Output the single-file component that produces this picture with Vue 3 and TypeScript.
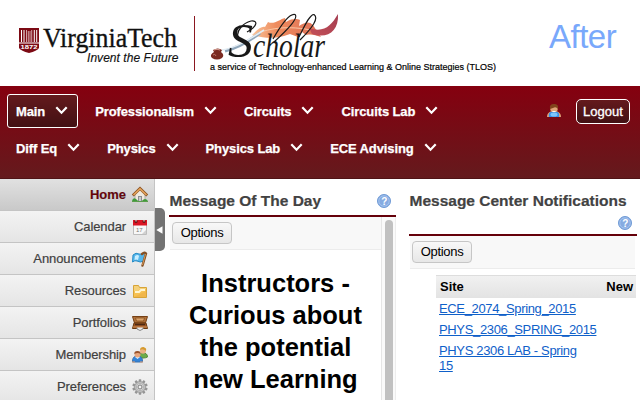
<script setup lang="ts">
interface NavItem { label: string; active?: boolean }
interface Tool { label: string; icon: string }

const navRows: NavItem[][] = [
  [{ label: 'Main', active: true }, { label: 'Professionalism' }, { label: 'Circuits' }, { label: 'Circuits Lab' }],
  [{ label: 'Diff Eq' }, { label: 'Physics' }, { label: 'Physics Lab' }, { label: 'ECE Advising' }],
]

const tools: Tool[] = [
  { label: 'Home', icon: 'home' },
  { label: 'Calendar', icon: 'calendar' },
  { label: 'Announcements', icon: 'flag' },
  { label: 'Resources', icon: 'folder' },
  { label: 'Portfolios', icon: 'case' },
  { label: 'Membership', icon: 'people' },
  { label: 'Preferences', icon: 'gear' },
]

const sites: string[] = ['ECE_2074_Spring_2015', 'PHYS_2306_SPRING_2015', 'PHYS 2306 LAB - Spring 15']
const teeth: number[] = [0, 36, 72, 108, 144, 180, 216, 252, 288, 324]
</script>

<template>
  <div class="page">
    <header class="banner">
      <svg class="vt" width="162" height="56" viewBox="0 0 162 56">
        <path d="M0 10H20V30Q18 33 10 35Q2 33 0 30Z" fill="#7c0a14" />
        <path d="M2.500 12V24M5 12V24M15.300 12V24M17.700 12V24" stroke="#fff" stroke-width="1" />
        <path d="M7.500 12V24M12.700 12V24M9.300 13V24M11 13V24" stroke="#e6c8cb" stroke-width=".8" />
        <path d="M0 25H20" stroke="#fff" stroke-width="1" />
        <text x="1.500" y="30.800" class="year" textLength="17" lengthAdjust="spacingAndGlyphs">1872</text>
        <text x="24" y="28.500" class="vt-name" textLength="134" lengthAdjust="spacingAndGlyphs">VirginiaTech</text>
        <text x="68" y="44" class="vt-tag" textLength="91.500">Invent the Future</text>
      </svg>
      <div class="rule"></div>
      <div class="scholar">
        <svg width="140" height="48" viewBox="0 0 140 48">
          <defs>
            <linearGradient id="plume" x1="0" x2="1">
              <stop offset="0" stop-color="#f8c49a" />
              <stop offset=".35" stop-color="#ee8b5d" />
              <stop offset="1" stop-color="#dd7058" />
            </linearGradient>
            <linearGradient id="tail" x1="0" y1="1" x2="1" y2="0">
              <stop offset="0" stop-color="#c45058" />
              <stop offset="1" stop-color="#a33c50" />
            </linearGradient>
          </defs>
          <path d="M47 22C53 16 57 13 60 14L63 9C69 12 75 6 80 5L81 9C88 5 92 6 95 7L94 13C100 9 104 8 108 12L113 20L116 24C110 22 107 21 101 22L97 19L93 24L85 21L79 23C69 26 58 25 47 22Z" fill="url(#plume)" />
          <path d="M48 22C66 14 88 12 114 19" stroke="#f9c7a5" stroke-width="1" fill="none" />
          <path d="M104 15C119 20 126 13 133 1C134 19 122 26 107 21Z" fill="url(#tail)" />
          <path d="M20 38C32 35 43 29 55 20" stroke="#8fa6ba" stroke-width="3" fill="none" />
          <path d="M17 37C30 35 42 28 59 17" stroke="#e3edf4" stroke-width="1.500" fill="none" />
          <path d="M8 37Q13 34 17 37L16 39Q20 42 17 45Q12 48 7 45Q4 42 9 39Z" fill="#7b2b22" />
          <path d="M9 37Q12 35.500 15 37" stroke="#d7a196" fill="none" />
          <path d="M8 42Q10 40 11 43" stroke="#bd7469" fill="none" />
          <text x="23" y="43.500" class="script cap" textLength="25" lengthAdjust="spacingAndGlyphs">S</text>
          <text x="48" y="43.500" class="script" textLength="72" lengthAdjust="spacingAndGlyphs">cholar</text>
          <path d="M42 19C53 13 53 7 46 8C38 10 31 18 33 24M69 29C82 17 94 5 90 1.500C85 0 76 12 68 26M95 27C108 14 114 5 109 1.500C105 1 100 12 94 24" stroke="#181818" stroke-width="1.200" fill="none" />
        </svg>
        <svg class="service" width="292" height="12" viewBox="0 0 292 12">
          <text x="0" y="8.800" textLength="286" lengthAdjust="spacingAndGlyphs">a service of Technology-enhanced Learning &amp; Online Strategies (TLOS)</text>
        </svg>
      </div>
      <div class="after">After</div>
    </header>

    <nav class="nav">
      <div class="rows">
        <div v-for="(row, r) in navRows" :key="r" class="nav-row">
          <a v-for="item in row" :key="item.label" class="site" :class="{ active: item.active }">
            <span>{{ item.label }}</span>
            <svg width="13" height="9" viewBox="0 0 13 9"><path d="M1.300 1.300L6.500 6.700L11.700 1.300" fill="none" stroke="#fff" stroke-width="2.200" /></svg>
          </a>
        </div>
      </div>
      <div class="account">
        <svg width="14" height="14" viewBox="0 0 14 14">
          <path d="M0 13C0 8 4 7 7 7S14 8 14 13Z" fill="#e1a477" />
          <path d="M2 13C1 8 4 7 7 8C10 7 13 8 12 13Z" fill="#3a91e9" />
          <ellipse cx="7" cy="10.500" rx="3.500" ry="2" fill="#7bc5fd" />
          <circle cx="7" cy="4.500" r="3.800" fill="#dfa478" />
          <path d="M3 5Q2 0 7 0Q12 0 11 5Q9 2 6 4Z" fill="#80441b" />
          <path d="M4.500 7Q7 9 9.500 7Z" fill="#fff" />
        </svg>
        <button class="logout">Logout</button>
      </div>
    </nav>

    <div class="body">
      <aside class="side">
        <a v-for="tool in tools" :key="tool.label" class="tool" :class="{ current: tool.icon === 'home' }">
          <span>{{ tool.label }}</span>
          <svg width="16" height="16" viewBox="0 0 16 16">
            <g v-if="tool.icon === 'home'">
              <path d="M3 7L8 2L13 7V14H3Z" fill="#eee9df" stroke="#98958d" stroke-width=".7" />
              <path d="M0.800 8.500L8 1.500L15.200 8.500" stroke="#8e5522" stroke-width="2.800" fill="none" />
              <path d="M1.500 8L8 1.700L14.500 8" stroke="#e8a75e" stroke-width="1.400" fill="none" />
              <path d="M6 14V9H10V14" fill="#8b8d90" /><path d="M7 14V10H9V14" fill="#c9cbcd" />
              <path d="M0 14Q1 10 4 12L6 14ZM10 14Q13 10 16 14Z" fill="#3f9b3b" /><path d="M0 14.500H16" stroke="#5b9d4d" />
            </g>
            <g v-else-if="tool.icon === 'calendar'">
              <path d="M1.500 2.500H14.500V15.500H1.500Z" fill="#f7f7f7" stroke="#bdbdbd" />
              <path d="M1 1H15V6.500H1Z" fill="#da1524" />
              <circle cx="4" cy="2.500" r="1.600" fill="#6e1616" /><circle cx="12" cy="2.500" r="1.600" fill="#6e1616" />
              <path d="M4 0V2.500M12 0V2.500" stroke="#eee" />
              <text x="4" y="13" class="date">17</text>
              <path d="M10 15L14 11V15Z" fill="#d1d1d1" />
            </g>
            <g v-else-if="tool.icon === 'flag'">
              <path d="M1 4Q4 1 7 3Q10 4 14 2L12 10Q8 12 5 10Q3 9 .5 11Z" fill="#55b6eb" stroke="#278bc5" />
              <path d="M3 5Q6 3 7 5L6 9Q4 8 2.500 9Z" fill="#c9eeff" />
              <path d="M10 3Q13 .5 14 2.500L10.500 14.500" fill="none" stroke="#855126" stroke-width="2.400" stroke-linecap="round" /><path d="M13.500 3L10.500 14" stroke="#d99a58" />
            </g>
            <g v-else-if="tool.icon === 'folder'">
              <path d="M1.500 14.500V2.500H6.500L7.500 4.500H14.500V14.500Z" fill="#f5d17a" stroke="#d7a438" />
              <path d="M2 14V8H6L8 6H14V14Z" fill="#f7c253" /><path d="M3 9H7L9 7H13" stroke="#fff6d2" stroke-width="2" fill="none" />
              <path d="M2 14L14 8V14Z" fill="#e9a941" opacity=".45" />
            </g>
            <g v-else-if="tool.icon === 'case'">
              <path d="M.5 1.500H15.500L13.500 8H2.500Z" fill="#b1723b" stroke="#754016" />
              <path d="M3.500 3H12.500L11.500 6H4.500Z" fill="#dba36b" stroke="#804719" stroke-width=".7" />
              <path d="M2 8H14L15.500 13.500H.5Z" fill="#9e5726" stroke="#69380f" />
              <path d="M3 9.500H13" stroke="#4c2a14" stroke-width="1.500" /><path d="M1 12H15" stroke="#d09257" />
              <path d="M5 12.500V14Q8 17 11 14V12.500" fill="#eee" stroke="#878787" />
            </g>
            <g v-else-if="tool.icon === 'people'">
              <path d="M7 11Q7 6 11 6Q15.500 6 15.500 10Q14 11 11 11Z" fill="#6cab49" stroke="#568d3b" />
              <circle cx="11" cy="3.700" r="3" fill="#eab184" /><path d="M8 3Q8 0 11.500 0Q15 1 14 4Q11 1 8 3Z" fill="#d69b2e" />
              <path d="M.5 15Q0 9 5.500 9Q11 9 10.500 15Z" fill="#3384d8" stroke="#3a71ae" />
              <path d="M3 10L5.500 12L8 10Z" fill="#e3f3ff" />
              <circle cx="5.500" cy="7.500" r="3" fill="#e8a77e" /><path d="M2.300 7Q2 4 5.500 4Q9 4 8.500 7Q6 5 2.300 7Z" fill="#99522b" />
              <path d="M0 15H3M8 15H11" stroke="#e5a377" />
            </g>
            <g v-else>
              <rect v-for="a in teeth" :key="a" x="6.700" y=".3" width="2.600" height="4" rx=".6" fill="#959595" :transform="`rotate(${a} 8 8)`" />
              <circle cx="8" cy="8" r="5.400" fill="#c6c6c6" stroke="#959595" stroke-width=".8" />
              <circle cx="8" cy="8" r="3.600" fill="#dedede" stroke="#a5a5a5" stroke-width=".7" />
              <circle cx="8" cy="8" r="2" fill="#f1f1f1" stroke="#7c7c7c" />
            </g>
          </svg>
        </a>
        <div class="handle"><svg width="7" height="8" viewBox="0 0 7 8"><path d="M6.500 .3V7.700L.3 4Z" fill="#fff" /></svg></div>
      </aside>

      <section class="panel motd">
        <div class="head"><h2>Message Of The Day</h2>
          <svg class="help" width="14" height="14" viewBox="0 0 14 14"><circle cx="7" cy="7" r="6.500" fill="#86abe1" stroke="#709bd6" /><circle cx="7" cy="7" r="5.200" fill="none" stroke="#abc8f1" stroke-width=".8" /><text x="4.200" y="10.600">?</text></svg>
        </div>
        <div class="frame">
          <div class="content">
            <div class="bar"><button class="options">Options</button></div>
            <p class="message">Instructors -<br />Curious about<br />the potential<br />new Learning</p>
          </div>
          <div class="track"><div class="thumb"></div></div>
        </div>
      </section>

      <section class="panel notes">
        <div class="head tall"><h2>Message Center Notifications</h2>
          <svg class="help" width="14" height="14" viewBox="0 0 14 14"><circle cx="7" cy="7" r="6.500" fill="#86abe1" stroke="#709bd6" /><circle cx="7" cy="7" r="5.200" fill="none" stroke="#abc8f1" stroke-width=".8" /><text x="4.200" y="10.600">?</text></svg>
        </div>
        <div class="bar"><button class="options">Options</button></div>
        <div class="table">
          <div class="thead"><span>Site</span><span>New</span></div>
          <div v-for="site in sites" :key="site" class="row"><a>{{ site }}</a></div>
        </div>
      </section>
    </div>
  </div>
</template>

<style>
body { margin: 0; overflow: hidden; }
</style>

<style scoped>
* { box-sizing: border-box; }
.page { width: 640px; height: 400px; overflow: hidden; background: #fff; font-family: "Liberation Sans", Arial, sans-serif; font-size: 13px; color: #000; }
svg { display: block; flex: none; overflow: visible; }
button { font-family: inherit; margin: 0; }
.banner { height: 86px; display: flex; padding-left: 19px; }
.vt { margin-top: 18px; }
.year { font: bold 6px "Liberation Sans", sans-serif; fill: #fff; }
.vt-name { font: 27px "Liberation Serif", serif; fill: #111; stroke: #111; stroke-width: .35px; }
.vt-tag { font: italic 12px "Liberation Sans", sans-serif; fill: #111; stroke: #111; stroke-width: .15px; }
.rule { width: 1px; height: 55px; margin: 16px 0 0 13px; background: #8b1720; }
.scholar { padding: 13px 0 0 11px; margin-left: 4px; width: 340px; }
.scholar svg { margin-left: -5px; }
.script { font: italic 33px "Liberation Serif", serif; fill: #181818; }
.cap { font-size: 48px; }
.scholar .service { margin-left: 0; }
.service text { font: 9.700px "Liberation Sans", sans-serif; fill: #000; stroke: #000; stroke-width: .2px; }
.after { margin: 18px 0 0 10px; font-size: 33px; line-height: 38px; letter-spacing: -.5px; color: #79a8fb; }

.nav { height: 93px; display: flex; justify-content: space-between; padding: 8px 10px 0 7px; background: linear-gradient(#85000f, #641a1d); border-bottom: 1px solid #501316; }
.rows { display: flex; flex-direction: column; gap: 3px; }
.nav-row { display: flex; gap: 8px; }
.site { height: 34px; display: flex; align-items: center; gap: 10px; padding: 0 9px 0 8px; border: 1px solid transparent; border-radius: 3px; color: #fff; font-weight: bold; letter-spacing: -.11px; white-space: nowrap; -webkit-text-stroke: .25px #fff; }
.site svg { margin-top: -2px; }
.site.active { border-color: #fff; background: linear-gradient(#641a1d, #421013); }
.account { display: flex; align-items: flex-start; gap: 15px; padding-top: 5px; }
.account svg { margin-top: 5px; }
.logout { width: 54px; height: 25px; padding: 0; border: 1px solid #fff; border-radius: 5px; background: linear-gradient(#641a1d, #421013); color: #fff; font-size: 13px; -webkit-text-stroke: .3px #fff; }

.body { display: flex; height: 221px; }
.side { position: relative; width: 155px; flex: none; border-right: 1px solid #c4c4c4; }
.tool { height: 32px; display: flex; align-items: center; justify-content: flex-end; gap: 6px; padding-right: 6px; background: linear-gradient(#f3f3f3, #e5e5e5); border-bottom: 1px solid #c4c4c4; color: #3f3f3f; letter-spacing: -.1px; -webkit-text-stroke: .2px #3f3f3f; }
.tool.current { background: linear-gradient(#e1e1e1, #c9c9c9); color: #690007; font-weight: bold; letter-spacing: 0; }
.date { font: 6px "Liberation Sans", sans-serif; fill: #777; stroke: none; }
.handle { position: absolute; left: 155px; top: 29px; width: 10px; height: 43px; display: flex; align-items: center; padding-left: 1px; border-radius: 0 5px 5px 0; background: #747474; }
.panel { flex: none; padding-top: 11px; }
.motd { width: 227px; margin-left: 14px; }
.notes { width: 228px; margin-left: 13px; }
.head { height: 27px; display: flex; justify-content: space-between; align-items: flex-start; padding-right: 5px; border-bottom: 2px solid #65000a; }
.head.tall { height: 46px; flex-wrap: wrap; justify-content: flex-end; }
.tall h2 { width: 223px; }
.tall .help { margin-top: 1px; }
h2 { margin: 0; padding-left: .5px; font-size: 15.500px; line-height: 21px; white-space: nowrap; color: #424242; -webkit-text-stroke: .2px #424242; }
.help { margin-top: 4px; }
.tall .help { margin-top: 0; }
.help text { font: bold 10px "Liberation Sans", sans-serif; fill: #fff; }
.frame { display: flex; height: 183px; }
.content { width: 211px; margin-left: 1px; }
.bar { height: 33px; padding: 5px 0 0 2px; background: #f8f8f8; border-bottom: 1px solid #ececec; }
.notes .bar { margin-left: 1px; width: 225px; }
.options { display: block; width: 60px; height: 22px; padding: 0 0 1px; border: 1px solid #c6c6c6; border-radius: 4px; background: linear-gradient(#f8f8f8, #e7e7e7); font-size: 13px; color: #000; letter-spacing: -.3px; }
.message { margin: 17px 0 0; text-align: center; font-size: 25.500px; line-height: 32px; font-weight: bold; white-space: nowrap; }
.track { width: 15px; height: 183px; padding: 3px 0 0 3px; border-left: 1px solid #e6e6e6; border-right: 1px solid #ededed; background: #fafafa; }
.thumb { width: 8px; height: 190px; border-radius: 4px; background: #c1c1c1; }
.table { width: 200px; margin: 6px 0 0 27px; }
.thead { display: flex; justify-content: space-between; height: 23px; line-height: 22px; padding: 0 3px 0 4px; border-top: 1px solid #ddd; background: linear-gradient(#f1f1f1, #e3e3e3); font-weight: bold; }
.row { padding: 3px 43px 3px 3px; line-height: 15px; }
.row a { color: #0f60c9; text-decoration: underline; letter-spacing: -.35px; }
</style>
